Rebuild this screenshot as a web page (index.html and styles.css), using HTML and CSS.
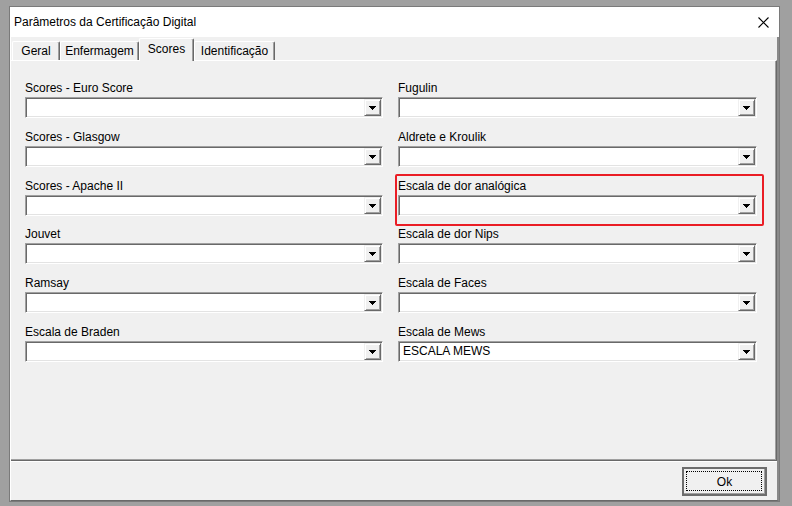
FILE: index.html
```html
<!DOCTYPE html>
<html lang="pt-BR">
<head>
<meta charset="utf-8">
<title>Parâmetros da Certificação Digital</title>
<link rel="stylesheet" href="styles.css">
</head>
<body>
<div class="window">
  <div class="titlebar">
    <span class="title">Parâmetros da Certificação Digital</span>
    <span class="close" aria-label="Fechar">
      <svg width="11" height="11" viewBox="0 0 11 11"><path d="M0.5 0.5L10.5 10.5M10.5 0.5L0.5 10.5" stroke="#000" stroke-width="1.1" fill="none"/></svg>
    </span>
  </div>
  <div class="client">
    <div class="tabs">
      <div class="tab tab-geral">Geral</div>
      <div class="tab tab-enf">Enfermagem</div>
      <div class="tab tab-scores active">Scores</div>
      <div class="tab tab-ident">Identificação</div>
    </div>
    <div class="panel">
      <div class="fields">
        <div class="field">
          <div class="label">Scores - Euro Score</div>
          <div class="combo"><span class="value"></span><span class="drop"><svg width="7" height="4" viewBox="0 0 7 4"><path d="M0 0h7v1h-1v1h-1v1h-1v1h-1v-1h-1v-1h-1v-1h-1z"/></svg></span></div>
        </div>
        <div class="field">
          <div class="label">Fugulin</div>
          <div class="combo"><span class="value"></span><span class="drop"><svg width="7" height="4" viewBox="0 0 7 4"><path d="M0 0h7v1h-1v1h-1v1h-1v1h-1v-1h-1v-1h-1v-1h-1z"/></svg></span></div>
        </div>
        <div class="field">
          <div class="label">Scores - Glasgow</div>
          <div class="combo"><span class="value"></span><span class="drop"><svg width="7" height="4" viewBox="0 0 7 4"><path d="M0 0h7v1h-1v1h-1v1h-1v1h-1v-1h-1v-1h-1v-1h-1z"/></svg></span></div>
        </div>
        <div class="field">
          <div class="label">Aldrete e Kroulik</div>
          <div class="combo"><span class="value"></span><span class="drop"><svg width="7" height="4" viewBox="0 0 7 4"><path d="M0 0h7v1h-1v1h-1v1h-1v1h-1v-1h-1v-1h-1v-1h-1z"/></svg></span></div>
        </div>
        <div class="field">
          <div class="label">Scores - Apache II</div>
          <div class="combo"><span class="value"></span><span class="drop"><svg width="7" height="4" viewBox="0 0 7 4"><path d="M0 0h7v1h-1v1h-1v1h-1v1h-1v-1h-1v-1h-1v-1h-1z"/></svg></span></div>
        </div>
        <div class="field marked">
          <div class="label">Escala de dor analógica</div>
          <div class="combo"><span class="value"></span><span class="drop"><svg width="7" height="4" viewBox="0 0 7 4"><path d="M0 0h7v1h-1v1h-1v1h-1v1h-1v-1h-1v-1h-1v-1h-1z"/></svg></span></div>
          <div class="mark"></div>
        </div>
        <div class="field">
          <div class="label">Jouvet</div>
          <div class="combo"><span class="value"></span><span class="drop"><svg width="7" height="4" viewBox="0 0 7 4"><path d="M0 0h7v1h-1v1h-1v1h-1v1h-1v-1h-1v-1h-1v-1h-1z"/></svg></span></div>
        </div>
        <div class="field">
          <div class="label">Escala de dor Nips</div>
          <div class="combo"><span class="value"></span><span class="drop"><svg width="7" height="4" viewBox="0 0 7 4"><path d="M0 0h7v1h-1v1h-1v1h-1v1h-1v-1h-1v-1h-1v-1h-1z"/></svg></span></div>
        </div>
        <div class="field">
          <div class="label">Ramsay</div>
          <div class="combo"><span class="value"></span><span class="drop"><svg width="7" height="4" viewBox="0 0 7 4"><path d="M0 0h7v1h-1v1h-1v1h-1v1h-1v-1h-1v-1h-1v-1h-1z"/></svg></span></div>
        </div>
        <div class="field">
          <div class="label">Escala de Faces</div>
          <div class="combo"><span class="value"></span><span class="drop"><svg width="7" height="4" viewBox="0 0 7 4"><path d="M0 0h7v1h-1v1h-1v1h-1v1h-1v-1h-1v-1h-1v-1h-1z"/></svg></span></div>
        </div>
        <div class="field">
          <div class="label">Escala de Braden</div>
          <div class="combo"><span class="value"></span><span class="drop"><svg width="7" height="4" viewBox="0 0 7 4"><path d="M0 0h7v1h-1v1h-1v1h-1v1h-1v-1h-1v-1h-1v-1h-1z"/></svg></span></div>
        </div>
        <div class="field">
          <div class="label">Escala de Mews</div>
          <div class="combo"><span class="value">ESCALA MEWS</span><span class="drop"><svg width="7" height="4" viewBox="0 0 7 4"><path d="M0 0h7v1h-1v1h-1v1h-1v1h-1v-1h-1v-1h-1v-1h-1z"/></svg></span></div>
        </div>
      </div>
    </div>
    <div class="footer">
      <button class="btn-ok" type="button">Ok</button>
    </div>
  </div>
</div>
</body>
</html>
```

FILE: styles.css
```css
* {
  box-sizing: border-box;
}

body {
  margin: 0;
  width: 792px;
  height: 506px;
  overflow: hidden;
  background: #a0a0a0;
  font-family: "Liberation Sans", Arial, sans-serif;
  font-size: 12px;
  color: #000;
}

/* dialog frame */
.window {
  margin: 6px 0 0 9px;
  width: 771px;
  height: 496px;
  border: 1px solid #7a7a7a;
  background: #f0f0f0;
  display: flex;
  flex-direction: column;
}

.titlebar {
  height: 30px;
  flex: none;
  background: #fff;
  display: flex;
  align-items: center;
  justify-content: space-between;
  padding: 0 10px 0 4px;
}

.close {
  display: flex;
  width: 11px;
  height: 11px;
}

.client {
  flex: 1;
  display: flex;
  flex-direction: column;
  border-left: 1px solid #fff;
  border-right: 2px solid #8a8a8a;
  border-bottom: 1px solid #696969;
}

/* tab strip */
.tabs {
  height: 23px;
  flex: none;
  display: flex;
  align-items: flex-end;
  padding-left: 1px;
  position: relative;
  z-index: 1;
}

.tab {
  height: 19px;
  display: flex;
  align-items: center;
  justify-content: center;
  border-top: 1px solid #fff;
  border-left: 1px solid #fff;
  border-right: 1px solid #696969;
  box-shadow: inset -1px 0 0 #a0a0a0;
  border-radius: 2px 2px 0 0;
  background: #f0f0f0;
}

.tab-geral { width: 48px; }
.tab-enf { width: 79px; }
.tab-scores { width: 55px; }
.tab-ident { width: 81px; }

.tab.active {
  height: 23px;
  margin-bottom: -1px;
  padding-bottom: 3px;
}

/* tab page */
.panel {
  height: 401px;
  flex: none;
  border-top: 1px solid #fff;
  border-right: 1px solid #696969;
  border-bottom: 1px solid #696969;
  box-shadow: inset -1px -1px 0 #a0a0a0;
  padding: 22px 0 0 14px;
}

.fields {
  display: grid;
  grid-template-columns: 358px 359px;
  column-gap: 15px;
  row-gap: 13.8px;
}

.field {
  position: relative;
  display: flex;
  flex-direction: column;
}

.label {
  height: 14px;
  line-height: 10px;
  white-space: nowrap;
}

.combo {
  height: 21px;
  display: flex;
  align-items: stretch;
  background: #fff;
  border-top: 1px solid #a0a0a0;
  border-left: 1px solid #a0a0a0;
  border-right: 1px solid #fff;
  border-bottom: 1px solid #fff;
  box-shadow: inset 1px 1px 0 #696969, inset -1px -1px 0 #e3e3e3;
  padding: 1px;
}

.value {
  flex: 1;
  padding-left: 3px;
  line-height: 17px;
  white-space: nowrap;
}

.drop {
  width: 17px;
  height: 17px;
  flex: none;
  display: flex;
  align-items: center;
  justify-content: center;
  padding-top: 1px;
  background: #f0f0f0;
  border-top: 1px solid #f0f0f0;
  border-left: 1px solid #f0f0f0;
  border-right: 1px solid #696969;
  border-bottom: 1px solid #696969;
  box-shadow: inset 1px 1px 0 #fff, inset -1px -1px 0 #a0a0a0;
}

.drop svg {
  display: block;
  fill: #000;
}

/* red outline drawn around one field */
.mark {
  position: absolute;
  top: -7px;
  left: -3px;
  right: -7px;
  bottom: -10px;
  border: 2px solid #ea1d25;
  border-radius: 2px;
  pointer-events: none;
}

/* button row */
.footer {
  flex: 1;
  border-top: 1px solid #fff;
  display: flex;
  justify-content: flex-end;
  align-items: flex-start;
  padding: 5px 10px 0 0;
}

.btn-ok {
  position: relative;
  width: 85px;
  height: 29px;
  margin: 0;
  padding: 0;
  background: #f0f0f0;
  border: 2px solid #6d6d6d;
  box-shadow: inset -1px -1px 0 #a0a0a0;
  font-family: "Liberation Sans", Arial, sans-serif;
  font-size: 12px;
  color: #000;
}

.btn-ok::after {
  content: "";
  position: absolute;
  inset: 2px 3px 3px 2px;
  border: 1px dotted #000;
}
```
